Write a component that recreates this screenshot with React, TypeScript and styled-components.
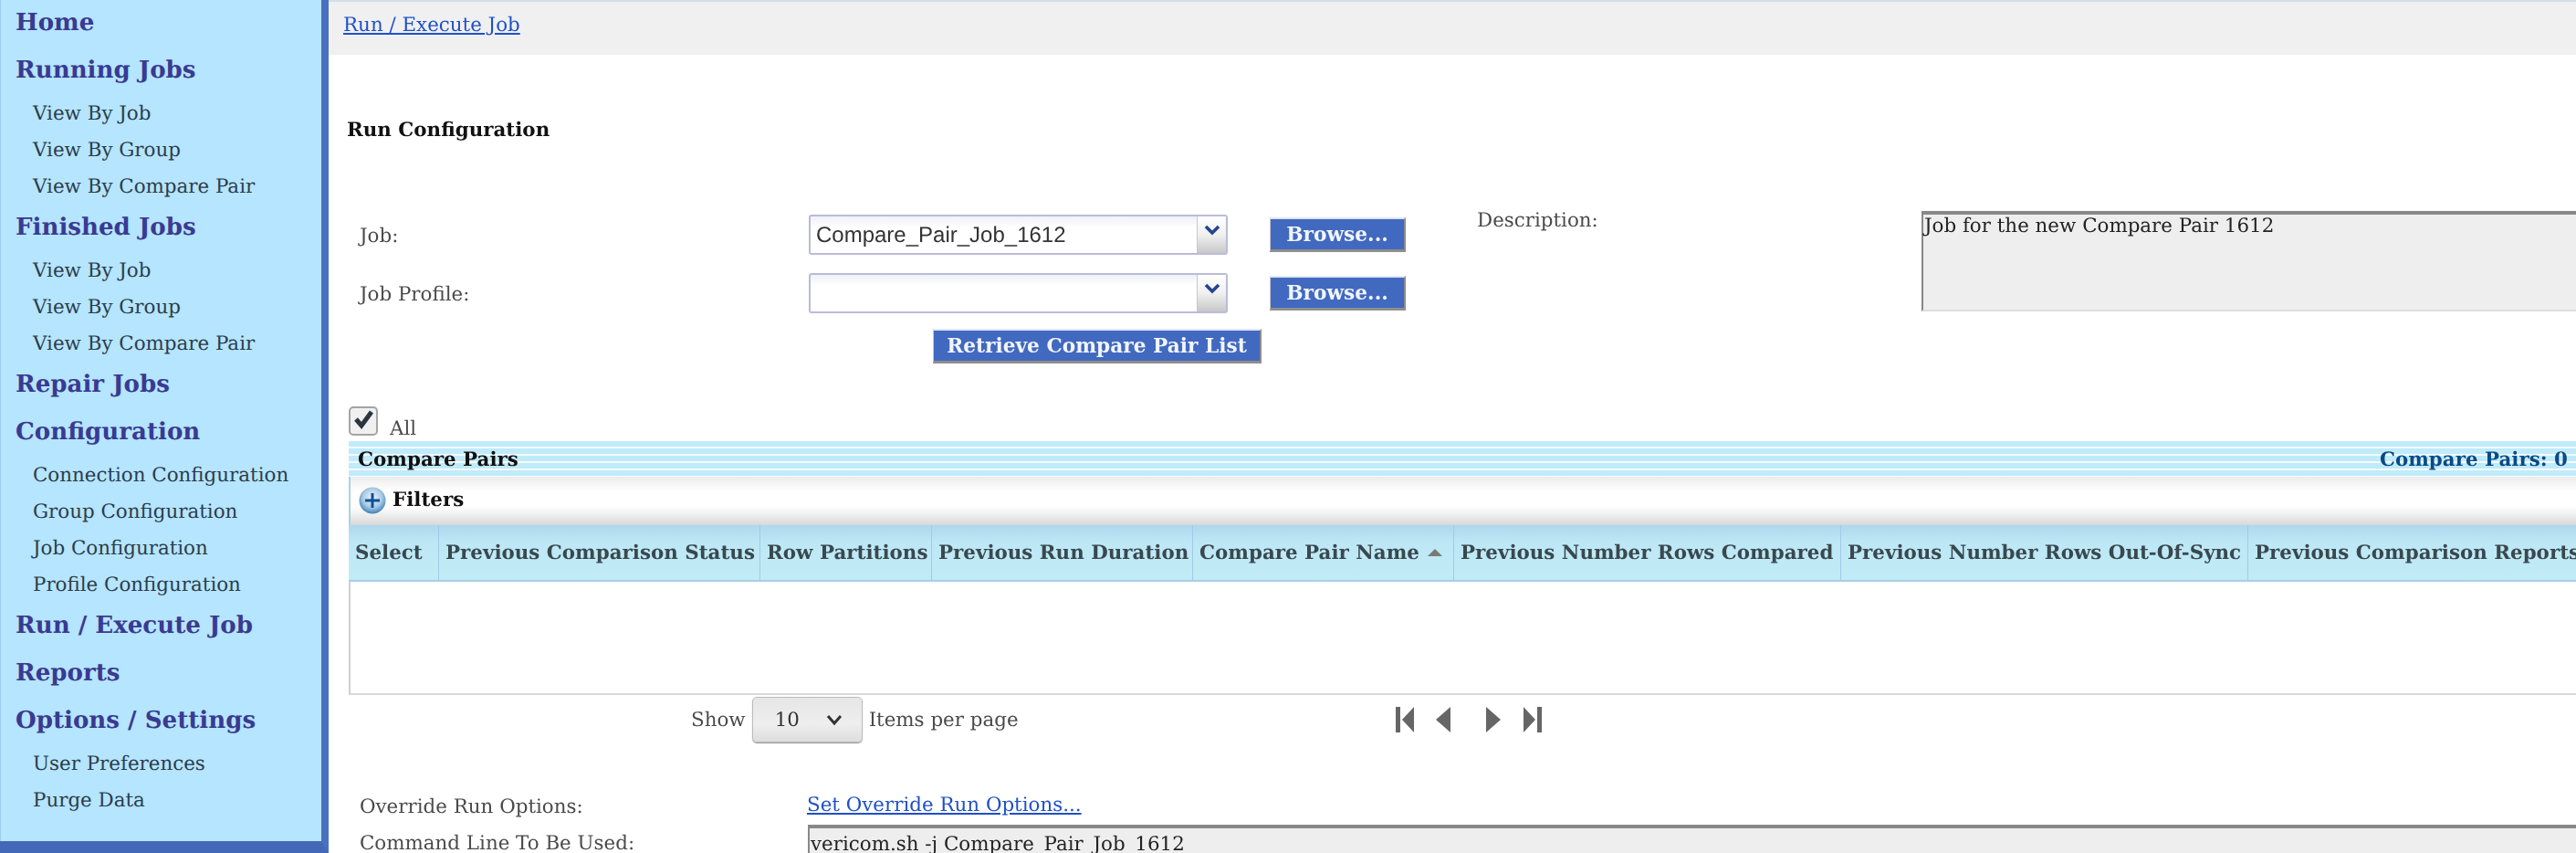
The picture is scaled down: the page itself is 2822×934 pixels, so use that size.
import React from 'react';
import styled, { createGlobalStyle } from 'styled-components';

const GlobalStyle = createGlobalStyle`
  html, body {
    margin: 0;
    height: 934px;
    overflow: hidden;
    background: #fff;
    font-family: "DejaVu Serif", serif;
    text-rendering: geometricPrecision;
  }
  * { box-sizing: border-box; }
`;

const Page = styled.div`
  display: flex;
  width: 2822px;
  height: 934px;
  overflow: hidden;
  filter: blur(0.6px);
`;

const Sidebar = styled.nav`
  flex: 0 0 360px;
  height: 934px;
  background: #b5e5ff;
  border-right: 8px solid #4a70c0;
  border-bottom: 13px solid #4468b8;
  box-shadow: inset 1px 0 0 #9ccdee;
`;

const NavHead = styled.a`
  display: block;
  height: 46px;
  margin-bottom: 6px;
  padding-left: 17px;
  line-height: 50px;
  font-size: 26.1px;
  font-weight: 700;
  color: #3a3a92;
`;

const NavGroup = styled.div`
  margin: -1px 0 1px;
`;

const NavItem = styled.a`
  display: block;
  height: 40px;
  padding: 2px 0 0 36px;
  line-height: 40px;
  font-size: 21.4px;
  color: #2c3c4c;
`;

const Main = styled.main`
  flex: 1;
  min-width: 0;
  overflow: hidden;
`;

const Breadcrumb = styled.div`
  height: 60px;
  padding: 13px 16px 0;
  background: #f0f0f0;
  border-top: 2px solid #d3deea;
  font-size: 21.4px;
`;

const LinkText = styled.a`
  color: #1f50c8;
  text-decoration: underline;
`;

const Title = styled.h2`
  margin: 68px 0 0 20px;
  height: 30px;
  line-height: 30px;
  font-size: 21.4px;
  font-weight: 700;
  color: #111;
`;

const ConfigBlock = styled.section`
  display: flex;
  height: 166px;
  margin-top: 73px;
`;

const JobForm = styled.div`
  flex: 0 0 1258px;
  padding: 4px 0 0 34px;
`;

const FormRow = styled.div`
  display: grid;
  grid-template-columns: 446px 459px 149px;
  column-gap: 46px;
  align-items: center;
  height: 44px;
  margin-bottom: 20px;
`;

const FieldLabel = styled.label`
  padding-top: 2px;
  font-size: 21.4px;
  color: #4a4a4a;
`;

const SelectBox = styled.div`
  display: flex;
  height: 44px;
  border: 2px solid #b9bcd8;
  border-radius: 3px;
  background: linear-gradient(#eef1f6, #fff 30%);
`;

const SelectValue = styled.span`
  flex: 1;
  padding-left: 6px;
  line-height: 42px;
  font-family: "Liberation Sans", sans-serif;
  font-size: 24px;
  color: #333;
`;

const SelectArrow = styled.span`
  display: flex;
  justify-content: center;
  padding-top: 9px;
  width: 32px;
  border-left: 1px solid #c6c6d0;
  background: linear-gradient(#fff, #f0f0f0 50%, #c8c8c8);
`;

const ActionButton = styled.button`
  display: block;
  height: 38px;
  padding: 0;
  border: 0;
  border-top: 2px solid #dfe6f5;
  border-right: 2px solid #8c8c8c;
  border-bottom: 3px solid #8e8e8e;
  border-left: 1px solid #c8c8c8;
  background: #4169c0;
  color: #f2f5fc;
  font-family: "DejaVu Serif", serif;
  font-size: 21.7px;
  font-weight: 700;
`;

const RetrieveButton = styled(ActionButton)`
  width: 360px;
  margin: -3px 0 0 628px;
`;

const DescLabel = styled(FieldLabel)`
  flex: 0 0 487px;
  padding-top: 0;
  line-height: 22px;
`;

const ReadonlyBox = styled.div<{ $height: number }>`
  flex: 1;
  height: ${(p) => p.$height}px;
  padding: 2px 1px;
  border-top: 4px solid #888;
  border-left: 2px solid #888;
  border-bottom: 2px solid #ddd;
  background: #eee;
  line-height: 22px;
  font-size: 21.4px;
  color: #222;
  white-space: nowrap;
`;

const CheckRow = styled.div`
  display: flex;
  height: 32px;
  margin: 48px 0 0 22px;
`;

const CheckBox = styled.span`
  display: block;
  width: 32px;
  height: 32px;
  border: 2px solid #a4a4a4;
  border-radius: 5px;
  background: #f0f0f0;
`;

const CheckLabel = styled.span`
  margin: 14px 0 0 13px;
  line-height: 22px;
  font-size: 21.4px;
  color: #4a4a4a;
`;

const ListPanel = styled.section`
  margin: 6px 0 0 22px;
`;

const StripeBar = styled.div`
  display: flex;
  justify-content: space-between;
  height: 39px;
  padding: 0 9px 0 10px;
  background: repeating-linear-gradient(#c0ebfb 0 6px, #f4fcff 6px 8px);
  line-height: 41px;
  font-size: 21.4px;
  font-weight: 700;
  color: #111;
`;

const PairCount = styled.span`
  color: #0b4a85;
`;

const FilterBar = styled.div`
  display: flex;
  align-items: center;
  gap: 7px;
  height: 53px;
  padding-left: 9px;
  padding-bottom: 2px;
  border-left: 2px solid #a8d4d8;
  background: linear-gradient(#ececec, #fff 30%, #fff 62%, #d8d8d8);
  font-size: 21.4px;
  font-weight: 700;
  color: #111;
`;

const HeaderRow = styled.div`
  display: flex;
  height: 62px;
  border-bottom: 2px solid #a9cfe8;
  background: linear-gradient(#aed7ee, #bde7f5 30%, #c0ecf6);
`;

const HeaderCell = styled.div<{ $width: number }>`
  flex: 0 0 ${(p) => p.$width}px;
  display: flex;
  align-items: center;
  gap: 9px;
  padding-left: 7px;
  border-right: 1px solid #a3c9e6;
  font-size: 21.4px;
  font-weight: 700;
  color: #39484f;
  white-space: nowrap;
`;

const SortArrow = styled.span`
  width: 0;
  height: 0;
  border-left: 8px solid transparent;
  border-right: 8px solid transparent;
  border-bottom: 8px solid #7a7a70;
`;

const TableBody = styled.div`
  height: 124px;
  border-left: 2px solid #d0d0d0;
  border-bottom: 2px solid #d8d8d8;
`;

const Pager = styled.div`
  display: flex;
  align-items: center;
  height: 50px;
  margin: 2px 0 0 22px;
`;

const PageSize = styled.div`
  flex: 0 0 1147px;
  display: flex;
  align-items: center;
  gap: 7px;
  padding-left: 375px;
  font-size: 21.4px;
  color: #4a4a4a;
`;

const SizeSelect = styled.div`
  display: flex;
  align-items: center;
  justify-content: space-between;
  width: 121px;
  height: 50px;
  padding: 0 21px 0 24px;
  border: 1px solid #bbb;
  border-radius: 5px;
  background: linear-gradient(#e6e6e6, #eee 60%, #ddd);
  box-shadow: 0 1px 1px #999;
  color: #333;
`;

const PagerNav = styled.div`
  display: flex;
  align-items: center;
  gap: 0;
`;

const OverrideRow = styled.div`
  display: grid;
  grid-template-columns: 490px 1fr;
  height: 30px;
  margin: 54px 0 0 34px;
  line-height: 30px;
  font-size: 21.4px;
`;

const CommandRow = styled.div`
  display: flex;
  height: 60px;
  margin: 6px 0 0 34px;
`;

const CommandLabel = styled(FieldLabel)`
  flex: 0 0 491px;
  padding-top: 10px;
  line-height: 22px;
`;

const CommandBox = styled(ReadonlyBox)`
  padding-top: 7px;
`;

const NavSections = [
  { head: 'Home' },
  { head: 'Running Jobs', items: ['View By Job', 'View By Group', 'View By Compare Pair'] },
  { head: 'Finished Jobs', items: ['View By Job', 'View By Group', 'View By Compare Pair'] },
  { head: 'Repair Jobs' },
  {
    head: 'Configuration',
    items: ['Connection Configuration', 'Group Configuration', 'Job Configuration', 'Profile Configuration'],
  },
  { head: 'Run / Execute Job' },
  { head: 'Reports' },
  { head: 'Options / Settings', items: ['User Preferences', 'Purge Data'] },
];

const Columns = [
  { name: 'Select', width: 99 },
  { name: 'Previous Comparison Status', width: 352 },
  { name: 'Row Partitions', width: 188 },
  { name: 'Previous Run Duration', width: 286 },
  { name: 'Compare Pair Name', width: 286, sorted: true },
  { name: 'Previous Number Rows Compared', width: 424 },
  { name: 'Previous Number Rows Out-Of-Sync', width: 446 },
  { name: 'Previous Comparison Reports', width: 400 },
];

const SelectChevron = () => (
  <svg width="18" height="12" viewBox="0 0 18 12">
    <path d="M2 2l7 7 7-7" fill="none" stroke="#23468f" strokeWidth="3.6" />
  </svg>
);

const SizeChevron = () => (
  <svg width="18" height="14" viewBox="0 0 18 14">
    <path d="M2 3l7 8 7-8" fill="none" stroke="#333" strokeWidth="3" />
  </svg>
);

const PlusIcon = () => (
  <svg width="30" height="30" viewBox="0 0 30 30">
    <defs>
      <radialGradient id="plusFill" cx="50%" cy="40%" r="60%">
        <stop offset="0%" stopColor="#f0f6fb" />
        <stop offset="60%" stopColor="#a9cbe6" />
        <stop offset="100%" stopColor="#3f80b8" />
      </radialGradient>
    </defs>
    <circle cx="15" cy="15" r="14.5" fill="url(#plusFill)" />
    <path d="M15 7v16M7 15h16" stroke="#124f95" strokeWidth="3" />
  </svg>
);

const CheckMark = () => (
  <svg width="28" height="28" viewBox="0 0 28 28">
    <path d="M6 12l6 7L23 4" fill="none" stroke="#2a3540" strokeWidth="5" />
  </svg>
);

const PagerIcon = ({ kind, width }: { kind: 'first' | 'prev' | 'next' | 'last'; width: number }) => {
  const paths = {
    first: 'M0 0h5v28H0zM7 14L20 0v28z',
    prev: 'M0 14L16 0v28z',
    next: 'M0 0l16 14L0 28z',
    last: 'M0 0l13 14L0 28zM15 0h5v28h-5z',
  };
  return (
    <svg width={width} height="28" viewBox={`0 0 ${width} 28`}>
      <path d={paths[kind]} fill="#666" />
    </svg>
  );
};

const PagerGap = styled.span<{ $width: number }>`
  width: ${(p) => p.$width}px;
`;

export default function App() {
  return (
    <>
      <GlobalStyle />
      <Page>
        <Sidebar>
          {NavSections.map((section) => (
            <React.Fragment key={section.head}>
              <NavHead>{section.head}</NavHead>
              {section.items && (
                <NavGroup>
                  {section.items.map((item) => (
                    <NavItem key={item}>{item}</NavItem>
                  ))}
                </NavGroup>
              )}
            </React.Fragment>
          ))}
        </Sidebar>
        <Main>
          <Breadcrumb>
            <LinkText>Run / Execute Job</LinkText>
          </Breadcrumb>
          <Title>Run Configuration</Title>
          <ConfigBlock>
            <JobForm>
              <FormRow>
                <FieldLabel>Job:</FieldLabel>
                <SelectBox>
                  <SelectValue>Compare_Pair_Job_1612</SelectValue>
                  <SelectArrow>
                    <SelectChevron />
                  </SelectArrow>
                </SelectBox>
                <ActionButton>Browse...</ActionButton>
              </FormRow>
              <FormRow>
                <FieldLabel>Job Profile:</FieldLabel>
                <SelectBox>
                  <SelectValue />
                  <SelectArrow>
                    <SelectChevron />
                  </SelectArrow>
                </SelectBox>
                <ActionButton>Browse...</ActionButton>
              </FormRow>
              <RetrieveButton>Retrieve Compare Pair List</RetrieveButton>
            </JobForm>
            <DescLabel>Description:</DescLabel>
            <ReadonlyBox $height={110}>Job for the new Compare Pair 1612</ReadonlyBox>
          </ConfigBlock>
          <CheckRow>
            <CheckBox>
              <CheckMark />
            </CheckBox>
            <CheckLabel>All</CheckLabel>
          </CheckRow>
          <ListPanel>
            <StripeBar>
              <span>Compare Pairs</span>
              <PairCount>Compare Pairs: 0</PairCount>
            </StripeBar>
            <FilterBar>
              <PlusIcon />
              Filters
            </FilterBar>
            <HeaderRow>
              {Columns.map((col) => (
                <HeaderCell key={col.name} $width={col.width}>
                  {col.name}
                  {col.sorted && <SortArrow />}
                </HeaderCell>
              ))}
            </HeaderRow>
            <TableBody />
          </ListPanel>
          <Pager>
            <PageSize>
              Show
              <SizeSelect>
                10
                <SizeChevron />
              </SizeSelect>
              Items per page
            </PageSize>
            <PagerNav>
              <PagerIcon kind="first" width={20} />
              <PagerGap $width={24} />
              <PagerIcon kind="prev" width={16} />
              <PagerGap $width={39} />
              <PagerIcon kind="next" width={16} />
              <PagerGap $width={25} />
              <PagerIcon kind="last" width={20} />
            </PagerNav>
          </Pager>
          <OverrideRow>
            <FieldLabel>Override Run Options:</FieldLabel>
            <LinkText>Set Override Run Options...</LinkText>
          </OverrideRow>
          <CommandRow>
            <CommandLabel>Command Line To Be Used:</CommandLabel>
            <CommandBox $height={60}>vericom.sh -j Compare_Pair_Job_1612</CommandBox>
          </CommandRow>
        </Main>
      </Page>
    </>
  );
}
